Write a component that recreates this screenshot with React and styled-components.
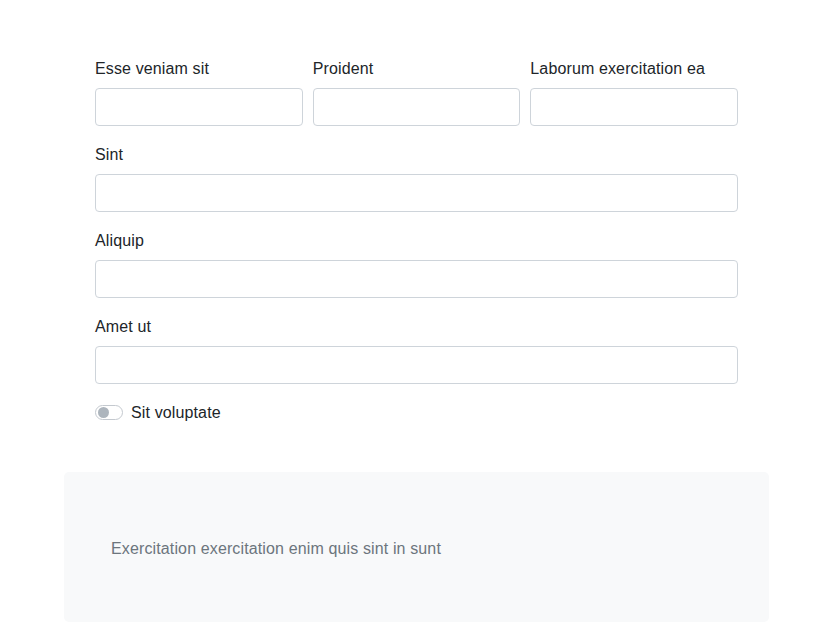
import React from "react";
import styled, { createGlobalStyle } from "styled-components";

const Global = createGlobalStyle`
  html, body { margin: 0; padding: 0; background: #fff; }
  body { font-family: "Liberation Sans", Arial, sans-serif; font-size: 16px; line-height: 24px; color: #212529; letter-spacing: 0.13px; }
  * { box-sizing: border-box; }
`;

const Page = styled.div`
  width: 705px;
  margin: 0 auto;
  padding-top: 56px;
`;

const Form = styled.form`
  width: 643px;
  margin: 0 auto;
  display: flex;
  flex-direction: column;
  gap: 16px;
`;

const Row = styled.div`
  display: grid;
  grid-template-columns: repeat(${(p) => p.$cols || 1}, 1fr);
  gap: 10px;
`;

const Field = styled.div`
  display: flex;
  flex-direction: column;
`;

const Label = styled.label`
  display: block;
  line-height: 24px;
  padding-top: 1px;
  margin-bottom: 7px;
  color: #212529;
`;

const Input = styled.input`
  display: block;
  width: 100%;
  height: 38px;
  padding: 6px 12px;
  font: inherit;
  border: 1px solid #ced4da;
  border-radius: 4px;
  background: #fff;
  outline: none;
`;

const SwitchRow = styled.label`
  display: flex;
  align-items: center;
  gap: 8px;
  height: 24px;
  line-height: 24px;
`;

const SwitchText = styled.span`
  line-height: 22px;
  padding-top: 2px;
`;

const Track = styled.span`
  position: relative;
  width: 28px;
  height: 15px;
  border: 1px solid #c4c9cf;
  border-radius: 8px;
  background: #fff;
  flex-shrink: 0;
`;

const Knob = styled.span`
  position: absolute;
  left: 2px;
  top: 1px;
  width: 11px;
  height: 11px;
  border-radius: 50%;
  background: #adb5bd;
`;

const Note = styled.div`
  margin-top: 48px;
  background: #f8f9fa;
  border-radius: 5px;
  padding: 65px 47px 61px;
  color: #6c757d;
  line-height: 24px;
`;

function TextField({ label }) {
  return (
    <Field>
      <Label>{label}</Label>
      <Input type="text" />
    </Field>
  );
}

export default function App() {
  return (
    <>
      <Global />
      <Page>
        <Form onSubmit={(e) => e.preventDefault()}>
          <Row $cols={3}>
            <TextField label="Esse veniam sit" />
            <TextField label="Proident" />
            <TextField label="Laborum exercitation ea" />
          </Row>
          <TextField label="Sint" />
          <TextField label="Aliquip" />
          <TextField label="Amet ut" />
          <SwitchRow>
            <Track>
              <Knob />
            </Track>
            <SwitchText>Sit voluptate</SwitchText>
          </SwitchRow>
        </Form>
        <Note>Exercitation exercitation enim quis sint in sunt</Note>
      </Page>
    </>
  );
}
